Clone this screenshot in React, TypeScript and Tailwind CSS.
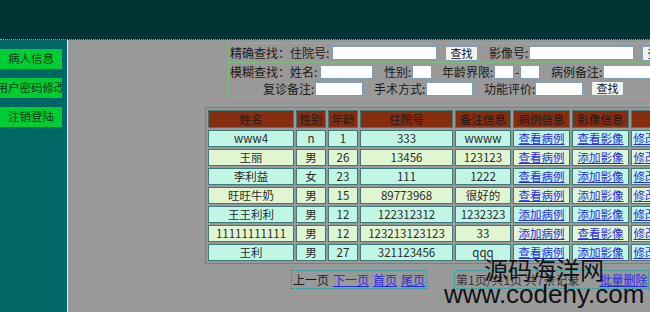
import React from 'react';

const menu = ['病人信息', '用户密码修改', '注销登陆'];

const rows = [
  ['www4', 'n', '1', '333', 'wwww', '查看病例', '查看影像'],
  ['王丽', '男', '26', '13456', '123123', '查看病例', '添加影像'],
  ['李利益', '女', '23', '111', '1222', '查看病例', '添加影像'],
  ['旺旺牛奶', '男', '15', '89773968', '很好的', '查看病例', '添加影像'],
  ['王王利利', '男', '12', '122312312', '1232323', '添加病例', '添加影像'],
  ['11111111111', '男', '12', '123213123123', '33', '添加病例', '查看影像'],
  ['王利', '男', '27', '321123456', 'qqq', '查看病例', '添加影像'],
];

const headers = ['姓名', '性别', '年龄', '住院号', '备注信息', '病例信息', '影像信息'];
const widths = [
  'w-[86px]', 'w-[30px]', 'w-[30px]', 'w-[93px]', 'w-[56px]',
  'w-[57px]', 'w-[57px]', 'w-[28px]', 'w-[28px]', 'w-[28px]',
];

function Input({ w }: { w: string }) {
  return <div className={`${w} h-[14px] shrink-0 bg-white border border-[#7f9db9]`} />;
}

function SearchButton({ className = '' }: { className?: string }) {
  return (
    <div
      className={`w-[33px] h-[15px] shrink-0 flex items-center justify-center bg-[#f2f2f2] border border-[#7f9db9] rounded-[2px] text-[11px] leading-none text-[#111] ${className}`}
    >
      查找
    </div>
  );
}

function Label({ w, children, className = '' }: { w: string; children: React.ReactNode; className?: string }) {
  return <span className={`${w} shrink-0 whitespace-nowrap ${className}`}>{children}</span>;
}

const cell = 'h-[17px] p-0 text-center border border-[#3f7a7a] leading-[15px] whitespace-nowrap overflow-hidden';
const headCell =
  'h-[18px] p-0 font-normal bg-[#862d10] border border-[#3f7a7a] text-[#1c1c1c] leading-[16px] whitespace-nowrap overflow-hidden';

export default function App() {
  return (
    <div
      className="relative w-[650px] h-[312px] overflow-hidden bg-[#999999]"
      style={{ fontFamily: '"Noto Sans CJK SC", "Noto Sans", sans-serif' }}
    >
      {/* Header */}
      <div className="h-[40px] bg-[#003333] border-b border-dotted border-[#33cccc]" />

      <div className="flex h-[272px]">
        {/* Sidebar */}
        <aside className="w-[68px] shrink-0 bg-[#006666] border-r border-[#dff2f2] pt-[9px] flex flex-col gap-[9px]">
          {menu.map((m) => (
            <div
              key={m}
              className="w-[62px] h-[20px] bg-[#00cc33] overflow-hidden flex justify-center items-center text-[11.5px] text-[#063a12] whitespace-nowrap"
            >
              <span className="shrink-0">{m}</span>
            </div>
          ))}
        </aside>

        {/* Main */}
        <main className="flex-1 flex flex-col overflow-hidden text-[#1a1a1a]">
          {/* Search */}
          <div className="ml-[160px] mt-[3px] w-[600px] shrink-0 border border-[#78c078] text-[12px] leading-[16px]">
            <div className="h-[19px] flex items-center pl-[1px] border-b border-[#78c078]">
              <Label w="w-[102px]">精确查找：住院号:</Label>
              <Input w="w-[105px]" />
              <SearchButton className="ml-[8px]" />
              <Label w="w-[40px]" className="ml-[11px]">影像号:</Label>
              <Input w="w-[105px]" />
              <SearchButton className="ml-[8px]" />
            </div>
            <div className="h-[17px] flex items-center pl-[1px]">
              <Label w="w-[90px]">模糊查找：姓名:</Label>
              <Input w="w-[53px]" />
              <Label w="w-[28px]" className="ml-[11px]">性别:</Label>
              <Input w="w-[20px]" />
              <Label w="w-[52px]" className="ml-[10px]">年龄界限:</Label>
              <Input w="w-[20px]" />
              <span className="w-[6px] text-center shrink-0">-</span>
              <Input w="w-[20px]" />
              <Label w="w-[52px]" className="ml-[11px]">病例备注:</Label>
              <Input w="w-[80px]" />
            </div>
            <div className="h-[17px] flex items-center pl-[34px]">
              <Label w="w-[52px]">复诊备注:</Label>
              <Input w="w-[48px]" />
              <Label w="w-[52px]" className="ml-[11px]">手术方式:</Label>
              <Input w="w-[47px]" />
              <Label w="w-[51px]" className="ml-[11px]">功能评价:</Label>
              <Input w="w-[48px]" />
              <SearchButton className="ml-[8px]" />
            </div>
          </div>

          {/* Table */}
          <table className="ml-[137px] mt-[9px] w-[517px] min-w-[517px] shrink-0 table-fixed border-separate border-spacing-[2px] border border-[#5a8c8c] text-[11.5px] text-[#2a2a2a]">
            <colgroup>
              {widths.map((w, i) => (
                <col key={i} className={w} />
              ))}
            </colgroup>
            <thead>
              <tr>
                {headers.map((h) => (
                  <th key={h} className={headCell}>
                    {h}
                  </th>
                ))}
                <th colSpan={3} className={headCell}>
                  操作
                </th>
              </tr>
            </thead>
            <tbody>
              {rows.map((r, ri) => (
                <tr key={ri} className={ri % 2 === 0 ? 'bg-[#c2f6e4]' : 'bg-[#e0f6d2]'}>
                  {r.map((c, ci) => (
                    <td key={ci} className={`${cell} ${ci >= 5 ? 'text-[#2a2aee] underline' : ''}`}>
                      {c}
                    </td>
                  ))}
                  <td className={`${cell} text-[#2a2aee] underline`}>修改</td>
                  <td className={`${cell} text-[#2a2aee] underline`}>删除</td>
                  <td className={cell}>
                    <div className="mx-auto w-[11px] h-[11px] bg-white border border-[#555]" />
                  </td>
                </tr>
              ))}
            </tbody>
          </table>

          {/* Pagination */}
          <div className="ml-[223px] mt-[6px] flex items-center text-[12px] leading-[16px] whitespace-nowrap">
            <div className="h-[19px] px-[1px] flex items-center gap-[4px] border border-dotted border-[#2f8f8f]">
              <span>上一页</span>
              <span className="text-[#2a2aee] underline">下一页</span>
              <span className="text-[#2a2aee] underline">首页</span>
              <span className="text-[#2a2aee] underline">尾页</span>
            </div>
            <div className="ml-[27px] h-[19px] px-[1px] flex items-center border border-dotted border-[#2f8f8f]">
              <span className="text-[#333]">第1页/共1页 共7条记录</span>
              <span className="ml-[20px] text-[#2a2aee] underline">批量删除</span>
            </div>
          </div>
        </main>
      </div>

      {/* Watermark */}
      <div className="absolute left-[484px] top-[255px] text-[24px] leading-[28px] text-[#111] whitespace-nowrap">
        源码海洋网
      </div>
      <div
        className="absolute left-[444px] top-[279px] text-[26px] leading-[30px] text-[#111] whitespace-nowrap"
        style={{ fontFamily: '"Liberation Sans", Arial, sans-serif' }}
      >
        www.codehy.com
      </div>
    </div>
  );
}
